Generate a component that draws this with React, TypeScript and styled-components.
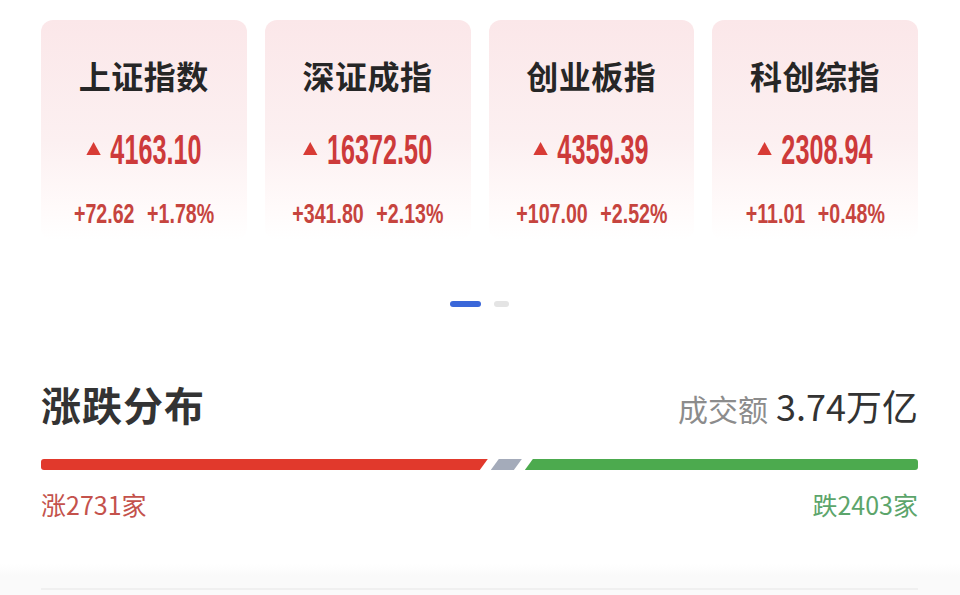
import React from "react";
import styled, { createGlobalStyle } from "styled-components";

const GlobalStyle = createGlobalStyle`
  html, body {
    margin: 0;
    padding: 0;
    background: #fff;
  }
  body {
    font-family: "Noto Sans CJK SC", "Noto Sans", sans-serif;
  }
`;

const indices = [
  { name: "上证指数", price: "4163.10", change: "+72.62", pct: "+1.78%" },
  { name: "深证成指", price: "16372.50", change: "+341.80", pct: "+2.13%" },
  { name: "创业板指", price: "4359.39", change: "+107.00", pct: "+2.52%" },
  { name: "科创综指", price: "2308.94", change: "+11.01", pct: "+0.48%" },
];

const breadth = { up: 2731, flat: 190, down: 2403 };

const Page = styled.main`
  width: 960px;
  height: 595px;
  overflow: hidden;
  display: flex;
  flex-direction: column;
`;

const Content = styled.div`
  padding: 20px 42px 0 41px;
  display: flex;
  flex-direction: column;
`;

const CardRow = styled.div`
  display: grid;
  grid-template-columns: repeat(4, minmax(0, 1fr));
  gap: 18px;
`;

const Card = styled.div`
  height: 220px;
  border-radius: 12px;
  background: linear-gradient(180deg, #fbe7e9 0%, #fcf0f1 55%, #fffafa 85%, #ffffff 100%);
  display: flex;
  flex-direction: column;
  align-items: center;
  padding-top: 35px;
  box-sizing: border-box;
`;

const CardTitle = styled.div`
  font-size: 32px;
  line-height: 40px;
  font-weight: 700;
  color: #262626;
  letter-spacing: 0.5px;
`;

/* condensed digits: the row is squeezed around its own centre */
const PriceRow = styled.div`
  margin-top: 33px;
  height: 44px;
  display: flex;
  align-items: center;
  gap: 16px;
  color: #cd3a3a;
  font-family: "Liberation Sans", "Noto Sans", sans-serif;
  font-weight: 700;
  transform: scaleX(0.6);
  transform-origin: center;
`;

const UpArrow = styled.span`
  width: 0;
  height: 0;
  border-left: 12px solid transparent;
  border-right: 12px solid transparent;
  border-bottom: 13px solid #d83b35;
  margin-top: -4px;
`;

const Price = styled.span`
  font-size: 42px;
  line-height: 44px;
`;

const ChangeRow = styled.div`
  margin-top: 27px;
  height: 30px;
  display: flex;
  align-items: center;
  gap: 18px;
  color: #c6443e;
  font-family: "Liberation Sans", "Noto Sans", sans-serif;
  font-weight: 700;
  transform: scaleX(0.7);
  transform-origin: center;
`;

const Change = styled.span`
  font-size: 28px;
  line-height: 30px;
`;

const Dots = styled.div`
  margin-top: 61px;
  display: flex;
  justify-content: center;
  gap: 13px;
`;

const Dot = styled.span<{ $active?: boolean }>`
  width: ${(p) => (p.$active ? "31px" : "15px")};
  height: 6px;
  border-radius: 3px;
  background: ${(p) => (p.$active ? "#3a67d9" : "#e4e4e4")};
`;

const SectionHead = styled.div`
  margin-top: 72px;
  height: 50px;
  display: flex;
  align-items: baseline;
  justify-content: space-between;
`;

const SectionTitle = styled.h2`
  margin: 0;
  font-size: 40px;
  line-height: 50px;
  font-weight: 700;
  color: #333;
  letter-spacing: 1px;
`;

const Turnover = styled.div`
  display: flex;
  align-items: baseline;
  gap: 8px;
`;

const TurnoverLabel = styled.span`
  font-size: 30px;
  color: #8c8c8c;
`;

const TurnoverValue = styled.span`
  font-size: 36px;
  color: #333;
`;

const Bar = styled.div`
  margin-top: 30px;
  height: 11px;
  display: flex;
  gap: 3px;
`;

const Segment = styled.div<{ $kind: "up" | "flat" | "down" }>`
  height: 100%;
  background: ${(p) =>
    p.$kind === "up" ? "#e1392c" : p.$kind === "flat" ? "#a4abba" : "#4caa4e"};
  border-radius: ${(p) =>
    p.$kind === "up" ? "3px 0 0 3px" : p.$kind === "down" ? "0 3px 3px 0" : "0"};
  clip-path: ${(p) =>
    p.$kind === "up"
      ? "polygon(0 0, 100% 0, calc(100% - 8px) 100%, 0 100%)"
      : p.$kind === "flat"
      ? "polygon(8px 0, 100% 0, calc(100% - 8px) 100%, 0 100%)"
      : "polygon(8px 0, 100% 0, 100% 100%, 0 100%)"};
`;

const Counts = styled.div`
  margin-top: 19px;
  height: 30px;
  display: flex;
  justify-content: space-between;
  font-size: 25px;
  line-height: 30px;
`;

const Count = styled.span<{ $up?: boolean }>`
  color: ${(p) => (p.$up ? "#c4524c" : "#5ca56b")};
`;

const Footer = styled.div`
  margin-top: auto;
  height: 26px;
  padding: 0 42px 5px 41px;
  background: linear-gradient(180deg, #ffffff 0%, #fafafa 40%);
  display: flex;
  align-items: flex-end;
`;

const FooterLine = styled.div`
  flex: 1;
  height: 2px;
  background: #f0f0f0;
`;

export default function App() {
  const total = breadth.up + breadth.flat + breadth.down;
  return (
    <Page>
      <GlobalStyle />
      <Content>
        <CardRow>
          {indices.map((it) => (
            <Card key={it.name}>
              <CardTitle>{it.name}</CardTitle>
              <PriceRow>
                <UpArrow />
                <Price>{it.price}</Price>
              </PriceRow>
              <ChangeRow>
                <Change>{it.change}</Change>
                <Change>{it.pct}</Change>
              </ChangeRow>
            </Card>
          ))}
        </CardRow>
        <Dots>
          <Dot $active />
          <Dot />
        </Dots>
        <SectionHead>
          <SectionTitle>涨跌分布</SectionTitle>
          <Turnover>
            <TurnoverLabel>成交额</TurnoverLabel>
            <TurnoverValue>3.74万亿</TurnoverValue>
          </Turnover>
        </SectionHead>
        <Bar>
          <Segment $kind="up" style={{ flexGrow: breadth.up / total }} />
          <Segment $kind="flat" style={{ flexGrow: breadth.flat / total }} />
          <Segment $kind="down" style={{ flexGrow: breadth.down / total }} />
        </Bar>
        <Counts>
          <Count $up>涨{breadth.up}家</Count>
          <Count>跌{breadth.down}家</Count>
        </Counts>
      </Content>
      <Footer>
        <FooterLine />
      </Footer>
    </Page>
  );
}
